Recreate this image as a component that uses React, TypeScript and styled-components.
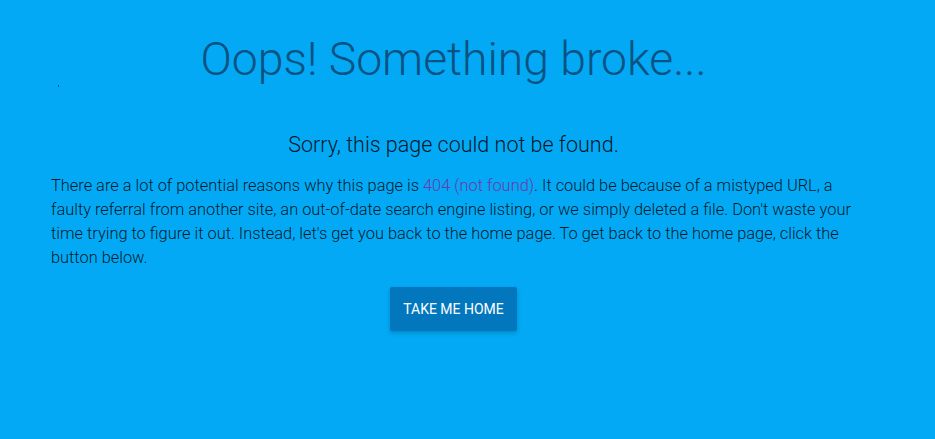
import React from "react";
import styled, { createGlobalStyle } from "styled-components";

const Global = createGlobalStyle`
  html, body { margin: 0; padding: 0; background: #03a9f4; }
  body { font-family: Roboto, "Liberation Sans", sans-serif; }
`;

const Page = styled.div`
  width: 935px;
  height: 439px;
  background: #03a9f4;
  box-sizing: border-box;
  padding: 28px 77px 0 51px;
  font-family: Roboto, "Liberation Sans", sans-serif;
`;

const Title = styled.h1`
  margin: 0 2px 0 0;
  text-align: center;
  font-weight: 300;
  font-size: 46.3px;
  line-height: 62px;
  color: #0a5282;
`;

const Dot = styled.div`
  width: 1px;
  height: 2px;
  margin: -5px 0 0 7px;
  background: #01579b;
`;

const Subtitle = styled.h2`
  margin: 44px 2px 0 0;
  text-align: center;
  font-weight: 300;
  font-size: 21.5px;
  line-height: 28px;
  color: rgba(0, 0, 0, 0.87);
`;

const Text = styled.p`
  margin: 15px 0 0;
  font-weight: 300;
  font-size: 16.4px;
  line-height: 24px;
  color: rgba(0, 0, 0, 0.85);
`;

const Link = styled.a`
  color: #6a3ab0;
  text-decoration: none;
`;

const Actions = styled.div`
  display: flex;
  justify-content: center;
  margin: 17px 2px 0 0;
`;

const Button = styled.button`
  width: 127px;
  height: 44px;
  border: none;
  border-radius: 2px;
  background: #0277bd;
  color: #fff;
  font-family: Roboto, "Liberation Sans", sans-serif;
  font-size: 14px;
  font-weight: 400;
  text-transform: uppercase;
  box-shadow: 0 2px 4px rgba(0, 0, 0, 0.2);
  cursor: pointer;
`;

export default function App() {
  return (
    <Page>
      <Global />
      <Title>Oops! Something broke...</Title>
      <Dot />
      <Subtitle>Sorry, this page could not be found.</Subtitle>
      <Text>
        There are a lot of potential reasons why this page is{" "}
        <Link href="#">404 (not found)</Link>. It could be because of a mistyped URL, a
        faulty referral from another site, an out-of-date search engine listing, or we
        simply deleted a file. Don't waste your time trying to figure it out. Instead,
        let's get you back to the home page. To get back to the home page, click the
        button below.
      </Text>
      <Actions>
        <Button>Take me home</Button>
      </Actions>
    </Page>
  );
}
